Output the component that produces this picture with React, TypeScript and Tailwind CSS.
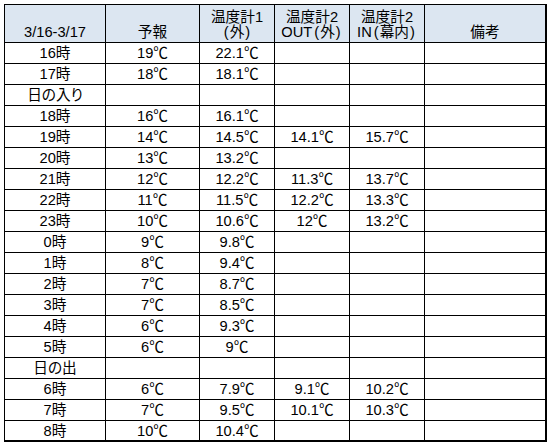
import React from "react";

const rows: string[][] = [
  ["16時", "19℃", "22.1℃", "", ""],
  ["17時", "18℃", "18.1℃", "", ""],
  ["日の入り", "", "", "", ""],
  ["18時", "16℃", "16.1℃", "", ""],
  ["19時", "14℃", "14.5℃", "14.1℃", "15.7℃"],
  ["20時", "13℃", "13.2℃", "", ""],
  ["21時", "12℃", "12.2℃", "11.3℃", "13.7℃"],
  ["22時", "11℃", "11.5℃", "12.2℃", "13.3℃"],
  ["23時", "10℃", "10.6℃", "12℃", "13.2℃"],
  ["0時", "9℃", "9.8℃", "", ""],
  ["1時", "8℃", "9.4℃", "", ""],
  ["2時", "7℃", "8.7℃", "", ""],
  ["3時", "7℃", "8.5℃", "", ""],
  ["4時", "6℃", "9.3℃", "", ""],
  ["5時", "6℃", "9℃", "", ""],
  ["日の出", "", "", "", ""],
  ["6時", "6℃", "7.9℃", "9.1℃", "10.2℃"],
  ["7時", "7℃", "9.5℃", "10.1℃", "10.3℃"],
  ["8時", "10℃", "10.4℃", "", ""],
];

type Line = { pre?: string; paren?: string };
const headers: Line[][] = [
  [{ pre: "3/16-3/17" }],
  [{ pre: "予報" }],
  [{ pre: "温度計1" }, { pre: "", paren: "外" }],
  [{ pre: "温度計2" }, { pre: "OUT", paren: "外" }],
  [{ pre: "温度計2" }, { pre: "IN", paren: "幕内" }],
  [{ pre: "備考" }],
];

export default function App() {
  return (
    <div className="w-[552px] h-[447px] bg-white pt-[4px] pl-[4px] text-black text-[14.67px] [font-family:'Liberation_Sans','Noto_Sans_CJK_JP',sans-serif] [font-feature-settings:'palt']">
      <div className="grid grid-cols-[101px_94px_75px_75px_75px_122px] w-fit border-l border-t border-black">
        {headers.map((h, i) => (
          <div
            key={"h" + i}
            className={`h-[38px] bg-[#dce6f1] border-b border-black flex flex-col items-center justify-end pb-[2px] leading-[15px] ${
              i === 5 ? "border-r-2" : "border-r"
            }`}
          >
            {h.map((line, j) => (
              <span key={j} className="whitespace-nowrap flex">
                {line.pre}
                {line.paren !== undefined && (
                  <>
                    <span className="ml-[2px] mr-[1px]">(</span>
                    {line.paren}
                    <span className="ml-[1px] mr-[2px]">)</span>
                  </>
                )}
              </span>
            ))}
          </div>
        ))}
        {rows.map((r, ri) => {
          const cells = [...r, ""];
          const last = ri === rows.length - 1;
          return cells.map((c, ci) => (
            <div
              key={ri + "-" + ci}
              className={`h-[21px] border-black flex items-center justify-center leading-[20px] whitespace-nowrap ${
                ci === 5 ? "border-r-2" : "border-r"
              } ${last ? "border-b-2" : "border-b"}`}
            >
              {c}
            </div>
          ));
        })}
      </div>
    </div>
  );
}
